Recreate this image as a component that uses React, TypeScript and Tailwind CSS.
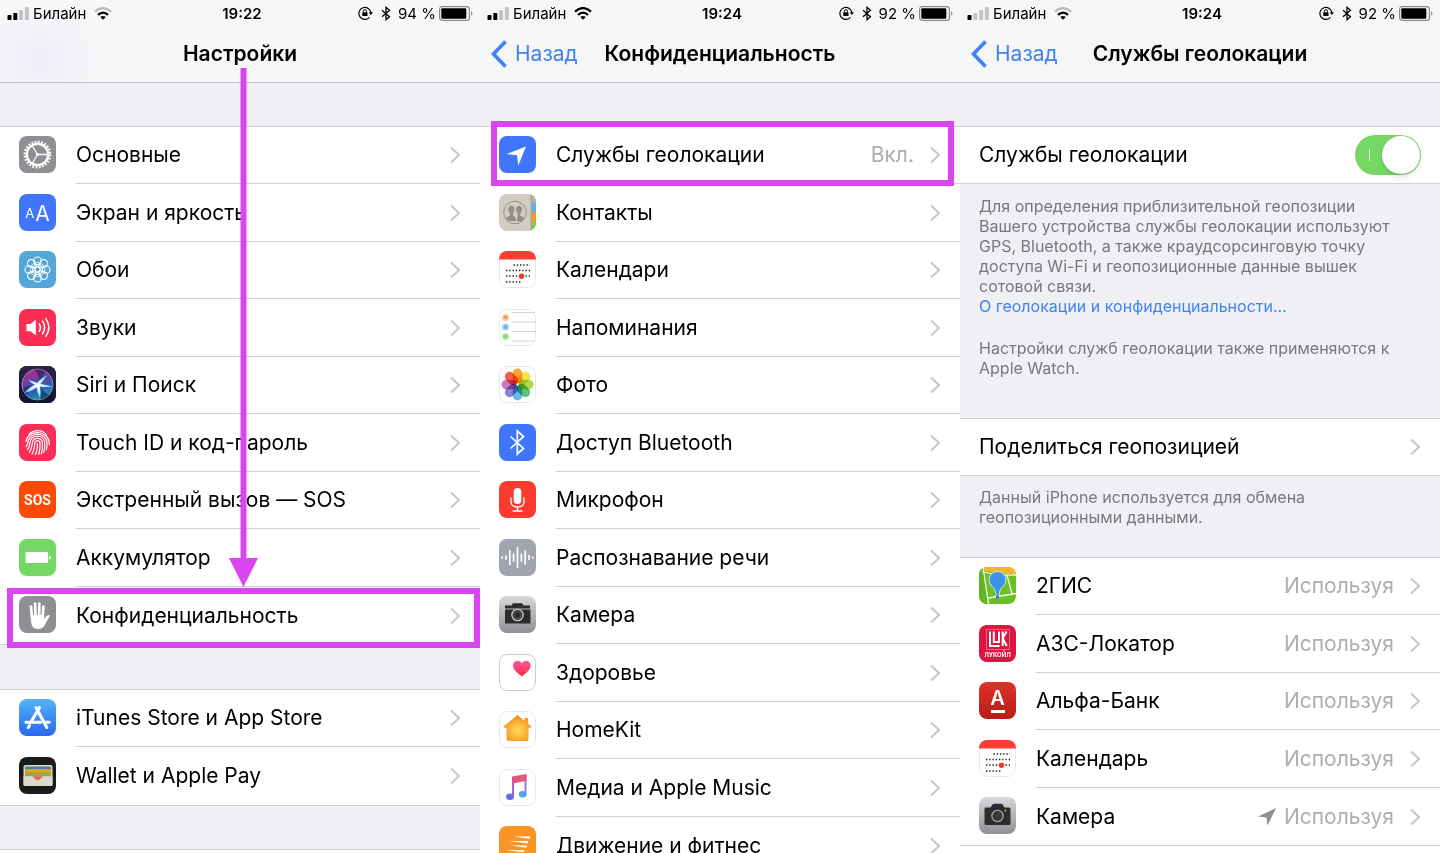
import React from "react";
import clsx from "clsx";

interface RowItem {
    label: string;
    icon: React.ReactNode;
    value?: string;
    arrow?: boolean;
    highlight?: string;
}

/* ---------- App icons ---------- */

const Tile: React.FC<{ className: string; children?: React.ReactNode }> = ({ className, children }) => (
    <span className={clsx("w-[37px] h-[37px] -mt-0.5 rounded-[8px] overflow-hidden shrink-0 flex items-center justify-center", className)}>{children}</span>
);

const Art: React.FC<{ children: React.ReactNode }> = ({ children }) => (
    <svg viewBox="0 0 37 37" className="w-full h-full" fill="none" aria-hidden="true">
        {children}
    </svg>
);

const petals = [0, 45, 90, 135, 180, 225, 270, 315];

const GearIcon = () => (
    <Tile className="bg-[#8e8e93]">
        <Art>
            <circle cx="18.5" cy="18.5" r="12.6" stroke="#fff" strokeWidth="2.6" strokeDasharray="1.8 1.5" />
            <circle cx="18.5" cy="18.5" r="10.6" stroke="#fff" strokeWidth="2.2" />
            <path d="M18.5 18.5H28M18.5 18.5L13.5 10M18.5 18.5L13.5 27" stroke="#fff" strokeWidth="1.3" />
            <circle cx="18.5" cy="18.5" r="1.5" fill="#fff" />
        </Art>
    </Tile>
);

const DisplayIcon = () => (
    <Tile className="bg-[#3f76fc] text-white gap-px leading-none items-baseline pt-[3px]">
        <span className="text-[13px]">A</span>
        <span className="text-[21px]">A</span>
    </Tile>
);

const WallpaperIcon = () => (
    <Tile className="bg-[#55a6d8]">
        <Art>
            <g stroke="#fff" strokeWidth="1.1">
                <circle cx="18.5" cy="18.5" r="2.6" />
                {petals.map((a) => (
                    <g key={a} transform={`rotate(${a} 18.5 18.5)`}>
                        <circle cx="18.5" cy="9.8" r="3.8" />
                        <circle cx="18.5" cy="13.6" r="2.4" strokeWidth=".7" />
                    </g>
                ))}
            </g>
        </Art>
    </Tile>
);

const SoundIcon = () => (
    <Tile className="bg-[#fc2d55]">
        <Art>
            <path d="M7.5 15h4l5.3-4.2v15.6L11.5 22.2h-4z" fill="#fff" />
            <path d="M20.3 14.8q2.200 3.700 0 7.400M23.600 12.200q4.200 6.300 0 12.600M26.800 9.600q6.200 8.900 0 17.800" stroke="#fff" strokeWidth="1.5" strokeLinecap="round" />
        </Art>
    </Tile>
);

const SiriIcon = () => (
    <Tile className="bg-[#1b1a3b]">
        <Art>
            <defs>
                <linearGradient id="siri-bg" x1="0" y1="0" x2="0" y2="1">
                    <stop offset="0" stopColor="#2a2544" />
                    <stop offset="1" stopColor="#10132e" />
                </linearGradient>
                <linearGradient id="siri-orb" x1=".2" y1="0" x2=".6" y2="1">
                    <stop offset="0" stopColor="#c02c8d" />
                    <stop offset=".4" stopColor="#6a3fa0" />
                    <stop offset=".7" stopColor="#2b62b5" />
                    <stop offset="1" stopColor="#1f9aa6" />
                </linearGradient>
                <radialGradient id="siri-glow" cx=".5" cy=".5" r=".5">
                    <stop offset="0" stopColor="#fff" />
                    <stop offset=".6" stopColor="#a9f0fa" />
                    <stop offset="1" stopColor="#4fd3e6" />
                </radialGradient>
            </defs>
            <rect width="37" height="37" fill="url(#siri-bg)" />
            <circle cx="18.5" cy="18.5" r="15.5" fill="url(#siri-orb)" stroke="#a09cc4" strokeWidth=".8" />
            <path d="M4 22Q10 19 17 18.500Q10 22 8 29Q4.500 26 4 22ZM21 20.500Q24 27 30 28.500Q26 33 21.500 33.500Q23 27 21 20.500ZM21 16Q20 9 15 3.500Q22 2.500 26 5.500Q24 11 21 16Z" fill="#141a45" opacity=".55" />
            <path d="M8.500 13.500Q14 15 18.500 17Q21.500 12 28.500 9Q24.500 14 21.500 18Q27 18.500 33 20.500Q27 21.500 21 20.500Q22 26 21 32Q18.500 27 17.700 21.500Q13 25 5.500 27Q10 21 16 18.800Q12 17 8.500 13.500Z" fill="url(#siri-glow)" />
        </Art>
    </Tile>
);

const TouchIdIcon = () => (
    <Tile className="bg-[#fc2d55]">
        <Art>
            <g stroke="#fff" strokeWidth="1.2" strokeLinecap="round">
                <path d="M10 10.300C15 5.500 22.500 5.500 27.200 10.300" />
                <path d="M7 17.500C8.500 5.500 28.500 5.500 30.200 18V21" />
                <path d="M7.200 22.500C8.500 21 8.400 20 8.800 18.500C10.300 7.500 26.700 7.500 28 18.500Q28.200 22.500 27.300 26" />
                <path d="M8.500 25.500C10.500 23.500 10.500 21 11 18.500C12.500 10 24.500 10 25.700 18.500Q26 24 24.700 28.500" />
                <path d="M10.500 28C13 25 12.800 21.500 13.400 18.500C14.500 13 22.200 13 23.400 18.500Q23.800 25 22.300 30" />
                <path d="M13 30C15.300 26.500 15.300 22.500 15.800 19C16.500 15.700 20.400 15.700 21 19Q21.300 25.500 19.700 30.500" />
                <path d="M16.300 30.500C18.300 27 18.500 23 18.400 19.500" />
            </g>
        </Art>
    </Tile>
);

const SosIcon = () => (
    <Tile className="bg-[#fc4a06]">
        <span className="font-['Roboto','Liberation_Sans',sans-serif] font-bold text-[14px] leading-none text-white">SOS</span>
    </Tile>
);

const BatteryIcon = () => (
    <Tile className="bg-[#75d765]">
        <Art>
            <rect x="6.500" y="13" width="22.500" height="11" rx=".8" fill="#fff" />
            <path d="M30 16.500q2 .3 2 2t-2 2z" fill="#fff" />
        </Art>
    </Tile>
);

const HandIcon = () => (
    <Tile className="bg-[#8e8e93]">
        <Art>
            <g stroke="#fff" strokeWidth="2.700" strokeLinecap="round">
                <path d="M12 10.500l1 11M16 7.500l.5 12M20.300 7.500l-.1 12M24.400 10.500l-.7 11" />
            </g>
            <path d="M11.500 19h13.500l.5 3.800c1.300-1.900 2.300-3.500 4.300-3.800 1-.1 1.300.7.7 1.500l-3.700 6.500c-1.500 3.500-3.500 6-7.800 6-5 0-6.500-3.500-7-7.500z" fill="#fff" />
        </Art>
    </Tile>
);

const AppStoreIcon = () => (
    <Tile className="bg-linear-to-b from-[#55b3f8] to-[#2b66ec]">
        <Art>
            <path d="M17 8.500L27.800 28.500M20.500 8.500L11.800 23.300M10.500 26.500L9.300 28.500M7 23.300h14.500M26 23.300H30.200" stroke="#fff" strokeWidth="3.100" strokeLinecap="round" />
        </Art>
    </Tile>
);

const WalletIcon = () => (
    <Tile className="bg-[#1b1b19]">
        <Art>
            <rect x="4.500" y="8" width="29" height="21" rx="2" fill="#ded9cd" />
            <rect x="6" y="9.500" width="26" height="3.500" rx="1" fill="#3f85a5" />
            <rect x="6" y="12" width="26" height="4" fill="#d9a32f" />
            <rect x="6" y="15.500" width="26" height="4" fill="#9aa83f" />
            <path d="M14 19.500h10l-2 2.500q-3 2-6 0z" fill="#e8635a" />
            <path d="M4.500 19.500h8.500q1.500 0 2.300 1.200 3.200 3.400 6.400 0 .8-1.200 2.300-1.200h9.500v8q0 1.500-1.500 1.500h-26q-1.500 0-1.500-1.500z" fill="#ded9cd" />
            <path d="M13.500 19.500h10.500l-2.800 2.500q-2.500 2.300-5 0z" fill="#e8635a" />
        </Art>
    </Tile>
);

const LocationIcon = () => (
    <Tile className="bg-[#3f76fc]">
        <Art>
            <path d="M27 10.500L19.300 29.500L18 19.200L7.500 18z" fill="#fff" />
        </Art>
    </Tile>
);

const ContactsIcon = () => (
    <Tile className="bg-[#d2cdc3]">
        <Art>
            <rect x="31.500" width="1.500" height="37" fill="#a8a59d" />
            <rect x="33" width="4" height="9" fill="#b4b1a9" />
            <rect x="33" y="9" width="4" height="9" fill="#55b5e8" />
            <rect x="33" y="18" width="4" height="10" fill="#f39a2f" />
            <rect x="33" y="28" width="4" height="9" fill="#76cf4f" />
            <circle cx="16" cy="18.500" r="11.300" stroke="#948f86" strokeWidth="1" />
            <path d="M7 25q0-2 4-3.500v-2q-2-2-1.800-4.500.3-3 3-3.200 3 .2 3.200 3.200.1 2.500-1.500 4.500v2q3 1 3.500 5.500h-5q-3 0-5.400-2z" fill="#948f86" />
            <path d="M18 27.500q0-4.500 .8-5.600v-2.200q-2-2-1.700-4.900.4-2.800 3-3 2.800.3 3 3 .1 2.800-1.800 4.900v2q3.800 1.200 4 3.300-2.500 2.800-7.300 2.500z" fill="#948f86" />
        </Art>
    </Tile>
);

const CalendarIcon = () => (
    <Tile className="bg-white">
        <Art>
            <rect x=".5" y=".5" width="36" height="36" rx="7.500" stroke="#e8e8e8" />
            <path d="M0 0h37v8.500H0z" fill="#fa3e34" />
            <path d="M14.500 14h16.500M7 19.500h24M7 25h24M7 31h16" stroke="#222" strokeWidth="1.300" strokeDasharray="1.400 1.850" />
            <circle cx="22.500" cy="25.200" r="2.700" fill="#f2382e" />
        </Art>
    </Tile>
);

const reminderDots = [
    { y: 8.5, color: "#f2a14a" },
    { y: 18, color: "#63b5ee" },
    { y: 27.5, color: "#84d369" },
];

const RemindersIcon = () => (
    <Tile className="bg-white">
        <Art>
            <rect x=".5" y=".5" width="36" height="36" rx="7.500" stroke="#e8e8e8" />
            <path d="M12.500 3.500h24M12.500 13h24M12.500 22.500h24M12.500 32h24" stroke="#cfcfcf" strokeWidth=".9" />
            {reminderDots.map((dot) => (
                <g key={dot.y}>
                    <circle cx="6.500" cy={dot.y} r="3.500" fill={dot.color} opacity=".55" />
                    <circle cx="6.500" cy={dot.y} r="2" fill={dot.color} />
                </g>
            ))}
        </Art>
    </Tile>
);

const petalColors = ["#f9a11f", "#f0e03a", "#a8d53f", "#4fc06b", "#5fb0e8", "#7f7ad0", "#c66fb4", "#f4503f"];

const PhotosIcon = () => (
    <Tile className="bg-white">
        <Art>
            <rect x=".5" y=".5" width="36" height="36" rx="7.500" stroke="#e8e8e8" />
            {petals.map((a, i) => (
                <rect
                    key={a}
                    x="13.700"
                    y="2.500"
                    width="9.600"
                    height="15"
                    rx="4.800"
                    fill={petalColors[i]}
                    opacity=".92"
                    className="mix-blend-multiply"
                    transform={`rotate(${a} 18.5 18.5)`}
                />
            ))}
        </Art>
    </Tile>
);

const BluetoothIcon = () => (
    <Tile className="bg-[#3f76fc]">
        <Art>
            <path d="M11.500 12.500L24.500 24.500L18.300 30V7L24.500 12.500L11.500 24.500" stroke="#fff" strokeWidth="1.700" />
        </Art>
    </Tile>
);

const MicIcon = () => (
    <Tile className="bg-[#fb3b30]">
        <Art>
            <rect x="14.700" y="7" width="7.600" height="16" rx="3.800" fill="#fff" />
            <path d="M12 17v3.500q0 5.500 6.500 5.500t6.500-5.500V17M18.500 26v4M14 30h9" stroke="#fff" strokeWidth="1.300" strokeLinecap="round" />
        </Art>
    </Tile>
);

const SpeechIcon = () => (
    <Tile className="bg-[#9fa4ae]">
        <Art>
            <path
                d="M3.200 18v1M7 17v3M10.800 11.500v14M14.600 15v7M18.500 8.500v20M22.400 15v7M26.200 12v13M30 16.500v4M33.800 18v1"
                stroke="#fff"
                strokeWidth="1.700"
                strokeLinecap="round"
            />
        </Art>
    </Tile>
);

const CameraIcon = () => (
    <Tile className="bg-linear-to-b from-[#d7d8da] to-[#8f9196]">
        <Art>
            <path d="M6 10.500h5.500l2-3q.5-.7 1.500-.7h7q1 0 1.500.7l2 3H30q1.500 0 1.500 1.500v14.500q0 1.500-1.500 1.500H7q-1.500 0-1.500-1.500V12z" fill="#2c2c2e" />
            <circle cx="18.500" cy="19" r="5.600" stroke="#a9aaad" strokeWidth="1.300" />
            <circle cx="18.500" cy="19" r="4" fill="#3a3a3c" />
            <circle cx="26.300" cy="13.500" r=".9" fill="#e8b320" />
        </Art>
    </Tile>
);

const PrivacyCameraIcon = () => (
    <Tile className="bg-linear-to-b from-[#d7d8da] to-[#8f9196]">
        <Art>
            <path d="M6 9.500h6.500l1.500-2.200h9l1.500 2.200h6.500v3H6zM6 13.500h25.500v14H6z" fill="#2c2c2e" />
            <circle cx="18.500" cy="19" r="5.600" fill="#2c2c2e" stroke="#c9cacd" strokeWidth="1.400" />
            <circle cx="18.500" cy="19" r="3.500" stroke="#6a6a6d" strokeWidth=".8" />
        </Art>
    </Tile>
);

const HealthIcon = () => (
    <Tile className="bg-white">
        <Art>
            <defs>
                <linearGradient id="heart" x1="0" y1="0" x2="0" y2="1">
                    <stop offset="0" stopColor="#fb5aa0" />
                    <stop offset="1" stopColor="#fa2d40" />
                </linearGradient>
            </defs>
            <rect x=".5" y=".5" width="36" height="36" rx="7.500" stroke="#c9c9cb" />
            <path d="M22.800 22.500C18 18.800 14 15.500 14 11.300C14 6.500 20 5 22.800 9.200C25.600 5 31.700 6.500 31.700 11.300C31.700 15.500 27.600 18.800 22.800 22.500Z" fill="url(#heart)" />
        </Art>
    </Tile>
);

const HomeKitIcon = () => (
    <Tile className="bg-white">
        <Art>
            <defs>
                <radialGradient id="home" cx=".5" cy=".6" r=".55">
                    <stop offset="0" stopColor="#fddc5c" />
                    <stop offset="1" stopColor="#f6921f" />
                </radialGradient>
            </defs>
            <rect x=".5" y=".5" width="36" height="36" rx="7.500" stroke="#e8e8e8" />
            <path d="M18.500 4L25.500 9.800V7h3.500v5.700L32.500 15.500Q32.500 16.800 31 16.800H29.500V28q0 2-2 2h-18q-2 0-2-2V16.800H6Q4.500 16.800 4.500 15.500Z" fill="url(#home)" />
        </Art>
    </Tile>
);

const MusicIcon = () => (
    <Tile className="bg-white">
        <Art>
            <defs>
                <linearGradient id="note" x1="0" y1="5" x2="0" y2="31" gradientUnits="userSpaceOnUse">
                    <stop offset="0" stopColor="#f0506d" />
                    <stop offset=".5" stopColor="#b85fc9" />
                    <stop offset="1" stopColor="#5c6cf5" />
                </linearGradient>
                <linearGradient id="note-right" x1="0" y1="5" x2="0" y2="29" gradientUnits="userSpaceOnUse">
                    <stop offset="0" stopColor="#f0506d" />
                    <stop offset=".5" stopColor="#9a7ad6" />
                    <stop offset="1" stopColor="#37b5f2" />
                </linearGradient>
            </defs>
            <rect x=".5" y=".5" width="36" height="36" rx="7.500" stroke="#e8e8e8" />
            <path d="M13 7.500L27.500 5V12L13 14.500Z" fill="#e5587c" />
            <path d="M13 8h2v19h-2z" fill="url(#note)" />
            <ellipse cx="11" cy="27.800" rx="4" ry="3.300" fill="url(#note)" />
            <path d="M25.500 6h2v19h-2z" fill="url(#note-right)" />
            <ellipse cx="23.700" cy="25.200" rx="3.900" ry="3.200" fill="url(#note-right)" />
        </Art>
    </Tile>
);

const FitnessIcon = () => (
    <Tile className="bg-[#fb9426]">
        <Art>
            <path d="M14 10.500h17.500l-.7 2.200zM9 15h20.500l-.8 2.300zM12 19.500h16l-.8 2.300zM5.500 24h20l-.8 2.300zM9 28.500h14l-.8 2.300z" fill="#fff" />
        </Art>
    </Tile>
);

const TwoGisIcon = () => (
    <Tile className="bg-[#6cc027]">
        <Art>
            <path d="M0 0h37v8L6 4z" fill="#f5b62d" />
            <path d="M0 0h4l5 37H0z" fill="#5fb621" />
            <path d="M4 0L9.500 37M3 4.500Q18 9 37 8M9 31L37 26.500M28 8L33 27" stroke="#f3f8e6" strokeWidth="1.300" />
            <path d="M18.500 4.500a8.300 8.300 0 0 1 8.500 8.500q0 4-3.500 7-3.300 2.600-3.700 10h-2.600q-.4-7.400-3.700-10Q10 17 10 13a8.300 8.300 0 0 1 8.500-8.500z" fill="#3d92ea" stroke="#f3f8e6" strokeWidth=".8" />
            <circle cx="18.500" cy="30" r="1.600" fill="#2f74cf" />
        </Art>
    </Tile>
);

const LukoilIcon = () => (
    <Tile className="bg-[#dc1640] flex-col gap-[2px]">
        <svg viewBox="0 0 24 21" className="w-6 h-[21px]" fill="none" aria-hidden="true">
            <rect x=".5" y=".5" width="23" height="20" stroke="#f08aa0" strokeWidth=".7" />
            <path d="M4 2.500v14.500h9.500M7.800 2.500v10.500h5.200V2.500M16.700 2.500V17M20.500 2.500l-3.800 7 4 7.500" stroke="#fff" strokeWidth="2" />
        </svg>
        <span className="text-[6px] leading-[6px] font-bold text-white">ЛУКОЙЛ</span>
    </Tile>
);

const AlfaIcon = () => (
    <Tile className="bg-linear-to-b from-[#dd3328] to-[#b81c17] flex-col">
        <span className="text-[20px] leading-[18px] font-semibold text-white">А</span>
        <span className="w-[14px] h-[3px] mt-[3px] bg-white" />
    </Tile>
);

/* ---------- Data ---------- */

const settings: RowItem[] = [
    { label: "Основные", icon: <GearIcon /> },
    { label: "Экран и яркость", icon: <DisplayIcon /> },
    { label: "Обои", icon: <WallpaperIcon /> },
    { label: "Звуки", icon: <SoundIcon /> },
    { label: "Siri и Поиск", icon: <SiriIcon /> },
    { label: "Touch ID и код-пароль", icon: <TouchIdIcon /> },
    { label: "Экстренный вызов — SOS", icon: <SosIcon /> },
    { label: "Аккумулятор", icon: <BatteryIcon /> },
    { label: "Конфиденциальность", icon: <HandIcon />, highlight: "left-[7px] right-0 top-px -bottom-1" },
];

const stores: RowItem[] = [
    { label: "iTunes Store и App Store", icon: <AppStoreIcon /> },
    { label: "Wallet и Apple Pay", icon: <WalletIcon /> },
];

const privacy: RowItem[] = [
    { label: "Службы геолокации", icon: <LocationIcon />, value: "Вкл.", highlight: "left-[11px] right-[6px] -top-[6px] -bottom-[2px]" },
    { label: "Контакты", icon: <ContactsIcon /> },
    { label: "Календари", icon: <CalendarIcon /> },
    { label: "Напоминания", icon: <RemindersIcon /> },
    { label: "Фото", icon: <PhotosIcon /> },
    { label: "Доступ Bluetooth", icon: <BluetoothIcon /> },
    { label: "Микрофон", icon: <MicIcon /> },
    { label: "Распознавание речи", icon: <SpeechIcon /> },
    { label: "Камера", icon: <PrivacyCameraIcon /> },
    { label: "Здоровье", icon: <HealthIcon /> },
    { label: "HomeKit", icon: <HomeKitIcon /> },
    { label: "Медиа и Apple Music", icon: <MusicIcon /> },
    { label: "Движение и фитнес", icon: <FitnessIcon /> },
];

const apps: RowItem[] = [
    { label: "2ГИС", icon: <TwoGisIcon />, value: "Используя" },
    { label: "АЗС-Локатор", icon: <LukoilIcon />, value: "Используя" },
    { label: "Альфа-Банк", icon: <AlfaIcon />, value: "Используя" },
    { label: "Календарь", icon: <CalendarIcon />, value: "Используя" },
    { label: "Камера", icon: <CameraIcon />, value: "Используя", arrow: true },
];

/* ---------- Building blocks ---------- */

const Chevron = () => (
    <svg viewBox="0 0 12 18" className="w-3 h-[18px] shrink-0" fill="none" aria-hidden="true">
        <path d="M2 1.500L10 9L2 16.500" stroke="#c7c7cc" strokeWidth="2" />
    </svg>
);

const StatusBar: React.FC<{ time: string; battery: string; bars: number; weakWifi?: boolean }> = ({ time, battery, bars, weakWifi }) => (
    <div className="grid grid-cols-[1fr_auto_1fr] items-center h-[26px] px-[7px] text-[15px] leading-none">
        <div className="flex items-center">
            <svg viewBox="0 0 22 13" className="w-[22px] h-[13px] mr-1" aria-hidden="true">
                {[5, 7, 10, 13].map((h, i) => (
                    <rect key={h} x={0.5 + i * 5.8} y={13 - h} width="4" height={h} rx=".8" fill={i < bars ? "#000" : "#c3c3c5"} />
                ))}
            </svg>
            <span>Билайн</span>
            <svg viewBox="0 0 18 13" className="w-[18px] h-[13px] ml-2" fill="none" aria-hidden="true">
                <path d="M1 4.600Q9-2.400 17 4.600" stroke={weakWifi ? "#b9b9bb" : "#000"} strokeWidth="2.300" />
                <path d="M4 7.800Q9 3.400 14 7.800" stroke="#000" strokeWidth="2.300" />
                <path d="M6.200 10Q9 7.800 11.800 10L9 12.800Z" fill="#000" />
            </svg>
        </div>
        <span className="font-semibold pl-1">{time}</span>
        <div className="flex items-center justify-end">
            <svg viewBox="0 0 15 14" className="w-[15px] h-[14px] mr-2" fill="none" aria-hidden="true">
                <path d="M11.500 11.300A6 6 0 1 1 12.900 7" stroke="#000" strokeWidth="1.200" />
                <path d="M10.800 6.300h4.200L12.900 9z" fill="#000" />
                <rect x="4.300" y="6.200" width="5.200" height="3.800" rx=".5" fill="#000" />
                <path d="M5.300 6.500V5.300a1.600 1.600 0 0 1 3.200 0v1.200" stroke="#000" strokeWidth="1" />
            </svg>
            <svg viewBox="0 0 10 15" className="w-[10px] h-[15px] mr-[7px]" fill="none" aria-hidden="true">
                <path d="M1 4.300L8.500 10.700L5 13.700V1.300L8.500 4.300L1 10.700" stroke="#000" strokeWidth="1.300" />
            </svg>
            <span className="mr-[3px]">{battery} %</span>
            <svg viewBox="0 0 34 15" className="w-[34px] h-[15px]" fill="none" aria-hidden="true">
                <rect x=".6" y=".6" width="29.800" height="13.800" rx="2.600" stroke="#8e8e90" strokeWidth="1.200" />
                <rect x="2.300" y="2.300" width="25" height="10.400" rx="1.200" fill="#000" />
                <path d="M32 5.200q1.500.8 1.500 2.300T32 9.800z" fill="#8e8e90" />
            </svg>
        </div>
    </div>
);

const NavBar: React.FC<{ title: string; back?: boolean }> = ({ title, back }) => (
    <div className="grid grid-cols-[1fr_auto_1fr] items-center h-14 px-[10px]">
        <div>
            {back && (
                <a href="#" className="flex items-center gap-[7px] text-[21px] leading-7 text-[#4283f4]">
                    <svg viewBox="0 0 18 28" className="w-[18px] h-7" fill="none" aria-hidden="true">
                        <path d="M15.500 1.500L3.500 14L15.500 26.500" stroke="currentColor" strokeWidth="3.700" />
                    </svg>
                    Назад
                </a>
            )}
        </div>
        <h1 className="text-[21px] leading-7 font-semibold">{title}</h1>
        <div />
    </div>
);

const Group: React.FC<{ items: RowItem[] }> = ({ items }) => (
    <ul className="bg-white border-y border-[#d0cfd4] shrink-0">
        {items.map((item) => (
            <li key={item.label} className="relative group odd:h-[57px] even:h-[58px]">
                <a href="#" className="flex items-center h-full pl-[19px] gap-5">
                    {item.icon}
                    <span className="flex flex-1 items-center self-stretch pr-[19px] border-b border-[#d0cfd4] group-last:border-b-0">
                        <span className="flex-1">{item.label}</span>
                        {item.arrow && (
                            <svg viewBox="0 0 18 18" className="w-[18px] h-[18px] mr-2" aria-hidden="true">
                                <path d="M18 0L9.500 17.500L8.500 9.500L0 8.500z" fill="#8e8e93" />
                            </svg>
                        )}
                        {item.value && <span className="mr-[15px] text-[#aeaeb2]">{item.value}</span>}
                        <Chevron />
                    </span>
                </a>
                {item.highlight && <span className={clsx("absolute border-6 border-[#d946f0] pointer-events-none", item.highlight)} />}
            </li>
        ))}
    </ul>
);

const Header: React.FC<{ className?: string; children: React.ReactNode }> = ({ className, children }) => (
    <header className={clsx("border-b border-[#c4c3c8] mb-[43px] shrink-0", className ?? "bg-[#f6f6f7]")}>{children}</header>
);

const Screen: React.FC<{ children: React.ReactNode }> = ({ children }) => (
    <section className="relative flex flex-col min-w-0 overflow-hidden bg-[#efeff4]">{children}</section>
);

export default function App() {
    return (
        <main className="grid grid-cols-3 h-screen overflow-hidden font-['Inter','Liberation_Sans',sans-serif] text-[21px] leading-7 text-black whitespace-nowrap">
            <Screen>
                <Header className="bg-[radial-gradient(circle_at_40px_60px,#eeeefa,#f7f7f8_60px)]">
                    <StatusBar time="19:22" battery="94" bars={2} weakWifi />
                    <NavBar title="Настройки" />
                </Header>
                <Group items={settings} />
                <div className="h-11 shrink-0" />
                <Group items={stores} />
                <div className="h-[43px] shrink-0" />
                <div className="flex-1 bg-white border-t border-[#d0cfd4]" />
                {/* Pointer from the title down to the privacy row */}
                <svg viewBox="0 0 30 519" className="absolute left-1/2 top-[68px] w-[30px] h-[519px] -ml-3 pointer-events-none" aria-hidden="true">
                    <path d="M12.500 0h6v490H30L15.500 519L1 490h11.500z" fill="#d946f0" />
                </svg>
            </Screen>

            <Screen>
                <Header>
                    <StatusBar time="19:24" battery="92" bars={2} />
                    <NavBar title="Конфиденциальность" back />
                </Header>
                <Group items={privacy} />
            </Screen>

            <Screen>
                <Header>
                    <StatusBar time="19:24" battery="92" bars={1} weakWifi />
                    <NavBar title="Службы геолокации" back />
                </Header>
                <div className="flex items-center justify-between shrink-0 px-[19px] bg-white border-y border-[#d0cfd4]">
                    <label htmlFor="location" className="leading-[56px]">
                        Службы геолокации
                    </label>
                    <span className="relative flex">
                        <input id="location" type="checkbox" role="switch" defaultChecked className="appearance-none w-[66px] h-10 rounded-full bg-[#76d765]" />
                        <span className="absolute left-[14px] top-[14px] w-px h-3 bg-white pointer-events-none" />
                        <span className="absolute right-px top-px w-[38px] h-[38px] rounded-full bg-white shadow-md pointer-events-none" />
                    </span>
                </div>
                <div className="h-[234px] shrink-0 px-[19px] pt-3 text-[16px] leading-5 text-[#77777c]">
                    <p>
                        Для определения приблизительной геопозиции
                        <br />
                        Вашего устройства службы геолокации используют
                        <br />
                        GPS, Bluetooth, а также краудсорсинговую точку
                        <br />
                        доступа Wi-Fi и геопозиционные данные вышек
                        <br />
                        сотовой связи.
                    </p>
                    <a href="#" className="text-[#4283f4]">
                        О геолокации и конфиденциальности...
                    </a>
                    <p className="mt-[22px]">
                        Настройки служб геолокации также применяются к
                        <br />
                        Apple Watch.
                    </p>
                </div>
                <a href="#" className="flex items-center justify-between shrink-0 px-[19px] bg-white border-y border-[#d0cfd4] leading-[56px]">
                    Поделиться геопозицией
                    <Chevron />
                </a>
                <p className="h-[81px] shrink-0 px-[19px] pt-[11px] text-[16px] leading-5 text-[#77777c]">
                    Данный iPhone используется для обмена
                    <br />
                    геопозиционными данными.
                </p>
                <Group items={apps} />
                <div className="flex-1 bg-white" />
            </Screen>
        </main>
    );
}
